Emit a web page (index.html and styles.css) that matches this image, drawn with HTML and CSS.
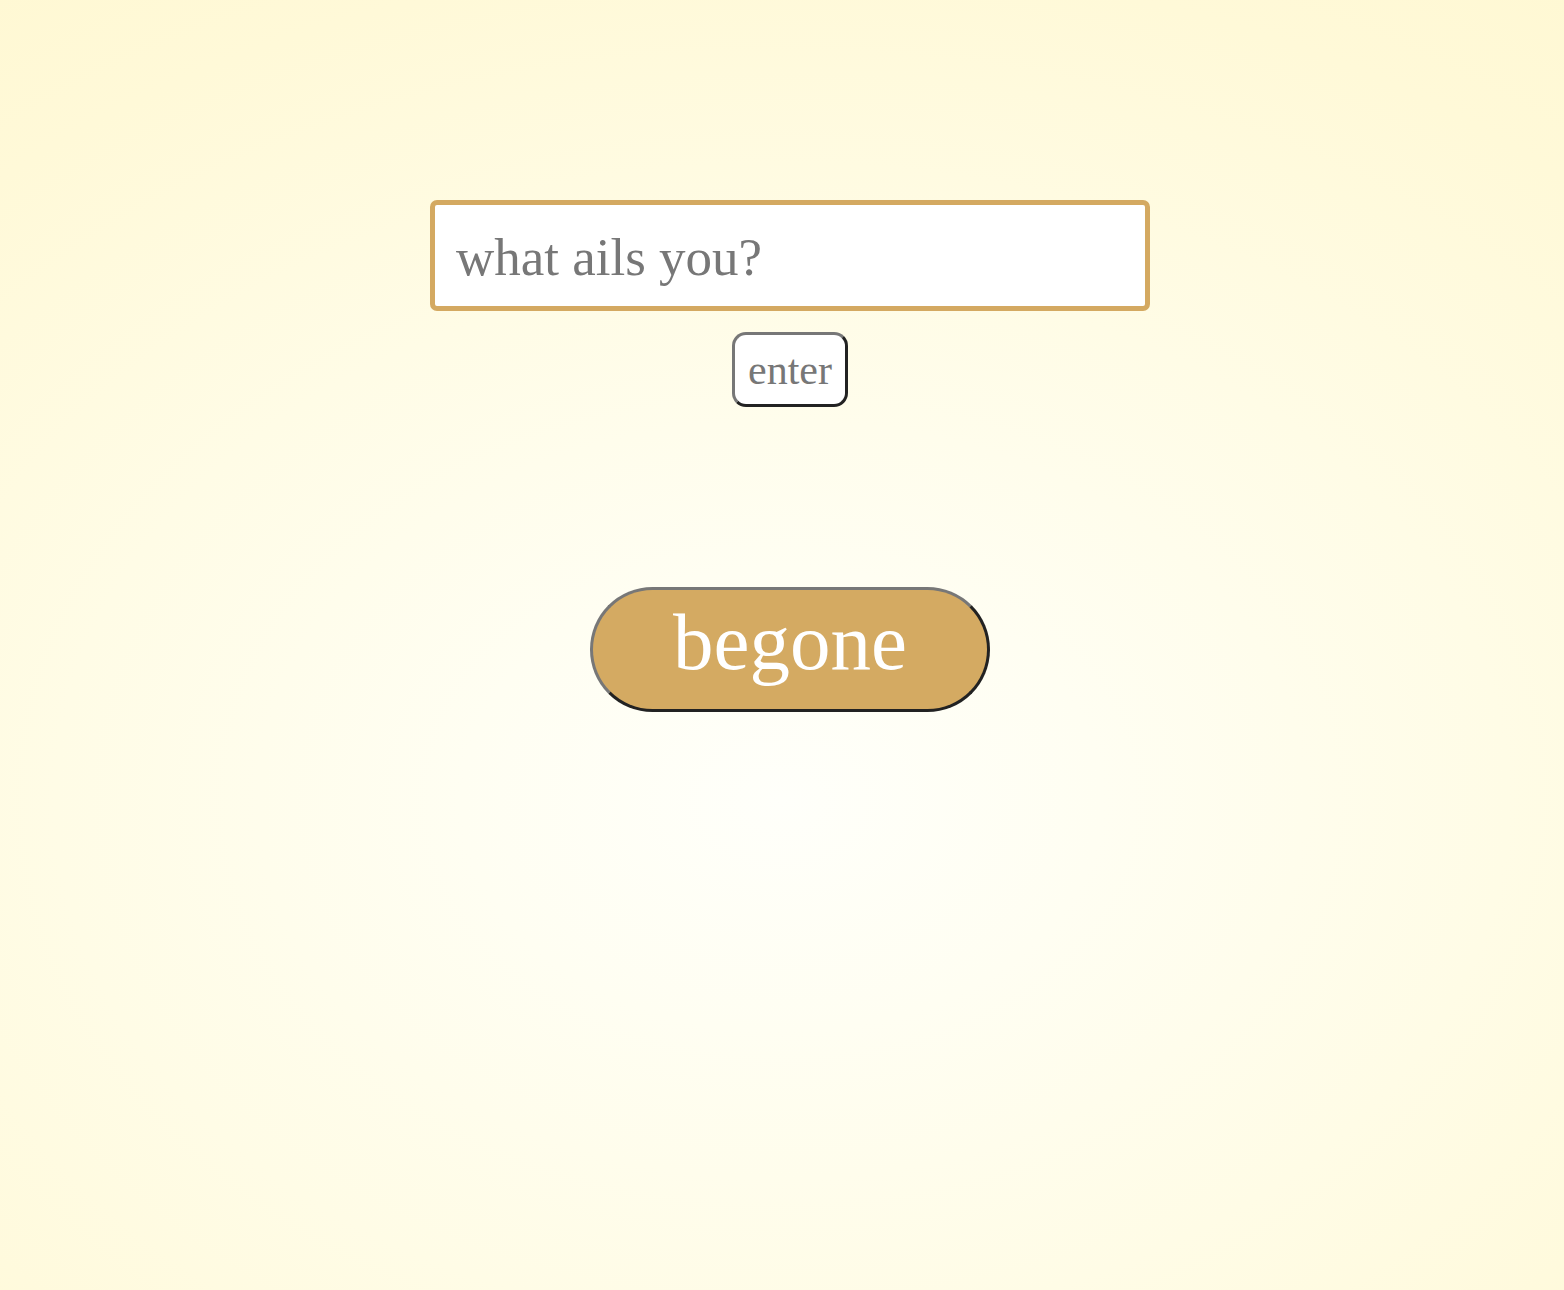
FILE: index.html
```html
<!DOCTYPE html>
<html lang="en">
<head>
<meta charset="utf-8">
<title>what ails you?</title>
<link rel="stylesheet" href="styles.css">
</head>
<body>
<main class="page">
  <form class="ask">
    <input class="ask-input" type="text" placeholder="what ails you?">
    <button class="enter-btn" type="button">enter</button>
  </form>
  <button class="begone-btn" type="button">begone</button>
</main>
</body>
</html>
```

FILE: styles.css
```css
html, body {
  margin: 0;
  padding: 0;
}

body {
  min-height: 100vh;
  background: radial-gradient(ellipse 1450px 1050px at 50% 800px,
    #fffffa 0%,
    #fffef2 22%,
    #fffce6 50%,
    #fff9d8 80%,
    #fff8d2 100%);
  font-family: "Liberation Serif", "Times New Roman", serif;
}

.page {
  display: flex;
  flex-direction: column;
  align-items: center;
  padding: 200px 0 0 16px;
}

.ask {
  display: flex;
  flex-direction: column;
  align-items: center;
  gap: 21px;
  margin: 0;
}

.ask-input {
  box-sizing: border-box;
  width: 720px;
  height: 111px;
  border: 5px solid #d4a961;
  border-radius: 7px;
  background: #ffffff;
  padding: 3px 21px 0 21px;
  font-family: "Liberation Serif", "Times New Roman", serif;
  font-size: 53px;
  color: #555;
  outline: none;
}

.ask-input::placeholder {
  color: #777777;
  opacity: 1;
}

.enter-btn {
  box-sizing: border-box;
  width: 116px;
  height: 75px;
  padding: 0;
  border: 3px solid;
  border-color: #777777 #222222 #222222 #777777;
  border-radius: 14px;
  background: #ffffff;
  color: #777777;
  font-family: "Liberation Serif", "Times New Roman", serif;
  font-size: 42px;
  cursor: pointer;
}

.begone-btn {
  box-sizing: border-box;
  margin-top: 180px;
  width: 400px;
  height: 125px;
  padding: 0 0 14px 0;
  border: 3px solid;
  border-color: #777777 #222222 #222222 #777777;
  border-radius: 63px;
  background: #d4aa62;
  color: #ffffff;
  font-family: "Liberation Serif", "Times New Roman", serif;
  font-size: 81px;
  cursor: pointer;
}
```
